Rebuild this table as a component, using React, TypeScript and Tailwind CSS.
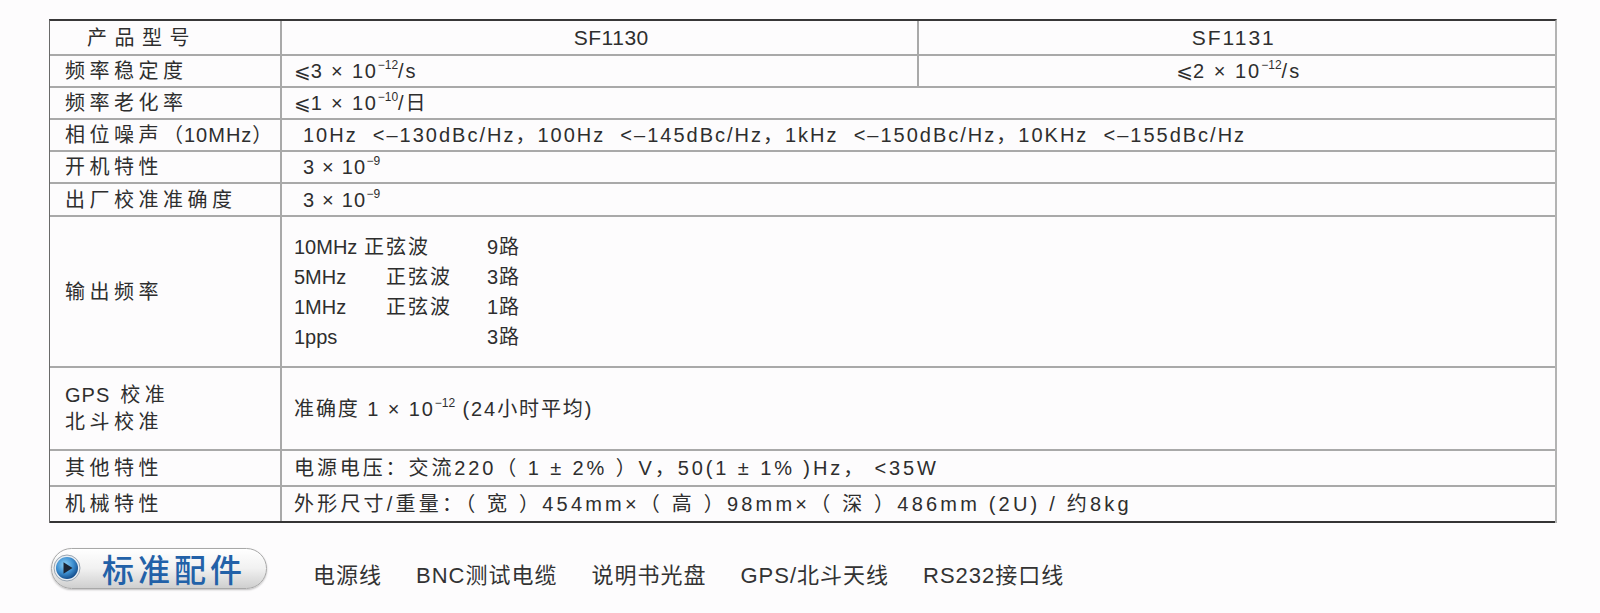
import React from 'react'

const line = 'border-b-2 border-[#a9a9a9]'

function Sup({ children }: { children: React.ReactNode }) {
    return <sup className="relative -top-[9px] align-baseline text-[12px] tracking-normal">{children}</sup>
}

function Le() {
    return <span className="font-['DejaVu_Sans'] tracking-normal">⩽</span>
}

function Row({
    label,
    h,
    last,
    labelClass = '',
    children,
}: {
    label: React.ReactNode
    h: string
    last?: boolean
    labelClass?: string
    children: React.ReactNode
}) {
    return (
        <div className={`flex ${h} ${last ? 'border-b-2 border-[#353535]' : line}`}>
            <div className={`w-[232px] shrink-0 flex items-center whitespace-nowrap border-r-2 border-[#a9a9a9] ${labelClass || 'pl-[15px] tracking-[4.5px]'}`}>
                {label}
            </div>
            <div className="flex-1 flex items-center">{children}</div>
        </div>
    )
}

export default function App() {
    return (
        <div className="w-[1600px] h-[613px] bg-[#fdfcfd] text-[#2e2e2e] font-['Liberation_Sans','Noto_Sans_CJK_SC',sans-serif] text-[20px] pt-[19px] overflow-hidden">
            {/* spec table */}
            <div className="ml-[49px] w-[1508px] border-t-2 border-t-[#383838] border-l border-l-[#6a6a6a] border-r-2 border-r-[#b3b3b3]">
                <Row label="产品型号" h="h-[35px]" labelClass="pl-[37px] tracking-[7.5px]">
                    <div className="w-1/2 h-full flex items-center justify-center border-r-2 border-[#a9a9a9] text-[21px] tracking-[0.5px] pl-[24px]">
                        SF1130
                    </div>
                    <div className="w-1/2 flex justify-center text-[21px] tracking-[2px] pr-[6px]">SF1131</div>
                </Row>
                <Row label="频率稳定度" h="h-[32px]">
                    <div className="w-1/2 h-full flex items-center border-r-2 border-[#a9a9a9] pl-[12px] tracking-[1.8px]">
                        <span>
                            <Le />3 × 10<Sup>−12</Sup>/s
                        </span>
                    </div>
                    <div className="w-1/2 flex justify-center tracking-[2px] pl-[4px]">
                        <span>
                            <Le />2 × 10<Sup>−12</Sup>/s
                        </span>
                    </div>
                </Row>
                <Row label="频率老化率" h="h-[32px]">
                    <span className="pl-[12px] tracking-[1.8px]">
                        <Le />1 × 10<Sup>−10</Sup>/日
                    </span>
                </Row>
                <Row
                    label={
                        <span>
                            相位噪声<span className="tracking-[1px]">（10MHz）</span>
                        </span>
                    }
                    h="h-[32px]"
                    labelClass="pl-[15px] tracking-[4.5px]"
                >
                    <span className="pl-[21px] whitespace-pre tracking-[2px]">
                        10Hz  &lt;–130dBc/Hz，100Hz  &lt;–145dBc/Hz，1kHz  &lt;–150dBc/Hz，10KHz  &lt;–155dBc/Hz
                    </span>
                </Row>
                <Row label="开机特性" h="h-[32px]">
                    <span className="pl-[21px] tracking-[1.2px]">
                        3 × 10<Sup>−9</Sup>
                    </span>
                </Row>
                <Row label="出厂校准准确度" h="h-[33px]">
                    <span className="pl-[21px] tracking-[1.2px]">
                        3 × 10<Sup>−9</Sup>
                    </span>
                </Row>
                <Row label="输出频率" h="h-[151px]">
                    <div className="pl-[12px] leading-[30px]">
                        <div className="flex">
                            <span className="w-[70px]">10MHz</span>
                            <span className="w-[123px] tracking-[2px]">正弦波</span>
                            <span className="tracking-[1px]">9路</span>
                        </div>
                        <div className="flex">
                            <span className="w-[92px]">5MHz</span>
                            <span className="w-[101px] tracking-[2px]">正弦波</span>
                            <span className="tracking-[1px]">3路</span>
                        </div>
                        <div className="flex">
                            <span className="w-[92px]">1MHz</span>
                            <span className="w-[101px] tracking-[2px]">正弦波</span>
                            <span className="tracking-[1px]">1路</span>
                        </div>
                        <div className="flex">
                            <span className="w-[193px]">1pps</span>
                            <span className="tracking-[1px]">3路</span>
                        </div>
                    </div>
                </Row>
                <Row
                    label={
                        <div className="leading-[27px]">
                            <div>
                                <span className="tracking-[1px]">GPS</span> 校准
                            </div>
                            <div>北斗校准</div>
                        </div>
                    }
                    h="h-[83px]"
                >
                    <span className="pl-[12px] tracking-[1.9px]">
                        准确度 1 × 10<Sup>−12</Sup> (24小时平均)
                    </span>
                </Row>
                <Row label="其他特性" h="h-[36px]">
                    <span className="pl-[12px] whitespace-pre tracking-[2.9px]">
                        电源电压：交流220（ 1 ± 2% ）V，50(1 ± 1% )Hz， &lt;35W
                    </span>
                </Row>
                <Row label="机械特性" h="h-[36px]" last>
                    <span className="pl-[12px] whitespace-pre tracking-[3.2px]">
                        外形尺寸/重量：（ 宽 ）454mm×（ 高 ）98mm×（ 深 ）486mm (2U) / 约8kg
                    </span>
                </Row>
            </div>

            {/* standard accessories */}
            <div className="flex items-center mt-[21px] ml-[51px]">
                <div className="w-[216px] h-[41px] shrink-0 flex items-center rounded-full border border-[#a8a8a8] bg-gradient-to-b from-[#ffffff] via-[#f1f1f1] to-[#cfcfcf] shadow-[inset_0_1px_1px_#ffffff,0_1px_2px_rgba(0,0,0,0.25)] pl-[1px]">
                    <svg width="28" height="28" viewBox="0 0 28 28" className="shrink-0">
                        <defs>
                            <radialGradient id="pb" cx="40%" cy="35%" r="65%">
                                <stop offset="0%" stopColor="#8fd0f5" />
                                <stop offset="60%" stopColor="#3d8fd0" />
                                <stop offset="100%" stopColor="#15508f" />
                            </radialGradient>
                        </defs>
                        <circle cx="14" cy="14" r="13" fill="#e9eef3" stroke="#9aa6b2" strokeWidth="1" />
                        <circle cx="14" cy="14" r="11" fill="url(#pb)" />
                        <path d="M10.5 8.2 L19.5 14 L10.5 19.8 Z" fill="#1b2433" />
                    </svg>
                    <span className="ml-[21px] text-[32px] font-medium tracking-[4px] text-[#2261a8] font-['Noto_Sans_CJK_SC',sans-serif] leading-none">
                        标准配件
                    </span>
                </div>
                <div className="flex gap-[34px] ml-[46px] mt-[15px] text-[22px] text-[#333] tracking-[1px]">
                    <span>电源线</span>
                    <span>BNC测试电缆</span>
                    <span>说明书光盘</span>
                    <span>GPS/北斗天线</span>
                    <span>RS232接口线</span>
                </div>
            </div>
        </div>
    )
}
